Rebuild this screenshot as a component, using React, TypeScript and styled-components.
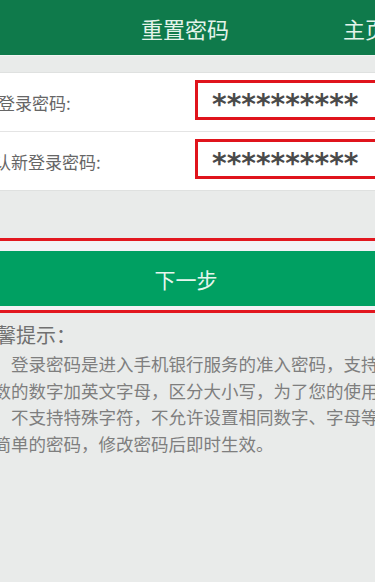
import React from "react";
import styled, { createGlobalStyle } from "styled-components";

const GlobalStyle = createGlobalStyle`
  html, body {
    margin: 0;
    padding: 0;
    background: #e9ebea;
  }
  body {
    font-family: "Noto Sans CJK SC", "Noto Sans", sans-serif;
  }
`;

const Viewport = styled.div`
  width: 375px;
  height: 582px;
  overflow: hidden;
  background: #e9ebea;
`;

/* the original phone screen is wider than the crop */
const Screen = styled.div`
  width: 434px;
  margin-left: -32px;
`;

const Header = styled.div`
  height: 55px;
  background: #0f7a4b;
  display: grid;
  grid-template-columns: 1fr auto 1fr;
  align-items: center;
  color: #e4f3ea;
  font-size: 22px;
  border-bottom: 1px solid #f2f5f3;
`;

const Title = styled.div`
  grid-column: 2;
`;

const HomeLink = styled.div`
  grid-column: 3;
  justify-self: end;
  padding-right: 15px;
`;

const Panel = styled.div`
  margin-top: 16px;
  background: #ffffff;
  border-top: 1px solid #dfe1e0;
  border-bottom: 1px solid #dfe1e0;
`;

const Row = styled.div<{ last?: boolean }>`
  height: 58px;
  display: flex;
  align-items: center;
  padding: 0 10px 0 13px;
  border-bottom: ${(p) => (p.last ? "none" : "1px solid #e4e4e4")};
`;

const Label = styled.div<{ shift?: number }>`
  font-size: 17px;
  color: #666666;
  white-space: nowrap;
  margin-left: ${(p) => p.shift ?? 0}px;
`;

const PasswordBox = styled.div`
  margin-left: auto;
  width: 177px;
  height: 34px;
  margin-bottom: 5px;
  border: 3px solid #e0141c;
  padding: 0 0 0 14px;
  display: flex;
  align-items: center;
  font-family: "DejaVu Sans", sans-serif;
  font-size: 28px;
  font-weight: 700;
  letter-spacing: 0;
  color: #4a4a4a;
  line-height: 1;
`;

const Stars = styled.span`
  padding-top: 10px;
`;

const RedFrame = styled.div`
  margin: 47px 5px 0;
  border: 3px solid #e2171f;
  padding: 10px 0 4px;
  background: #f2f2f5;
`;

const NextButton = styled.div`
  height: 55px;
  background: #00a062;
  color: #e6f6ee;
  font-size: 21px;
  display: flex;
  align-items: center;
  justify-content: center;
  padding-left: 2px;
`;

const Tips = styled.div`
  padding: 9px 8px 0;
  color: #7e7e7e;
`;

const TipsTitle = styled.div`
  font-size: 20px;
  line-height: 26px;
  margin-bottom: 3px;
  color: #707070;
`;

const TipLine = styled.div`
  font-size: 17.5px;
  line-height: 26.7px;
  white-space: nowrap;
`;

const tipLines = [
  "１、登录密码是进入手机银行服务的准入密码，支持６-２０",
  "位数的数字加英文字母，区分大小写，为了您的使用安",
  "全，不支持特殊字符，不允许设置相同数字、字母等过",
  "于简单的密码，修改密码后即时生效。",
];

export default function App() {
  return (
    <Viewport>
      <GlobalStyle />
      <Screen>
        <Header>
          <Title>重置密码</Title>
          <HomeLink>主页</HomeLink>
        </Header>
        <Panel>
          <Row>
            <Label>新登录密码:</Label>
            <PasswordBox>
              <Stars>**********</Stars>
            </PasswordBox>
          </Row>
          <Row last>
            <Label shift={-4}>确认新登录密码:</Label>
            <PasswordBox>
              <Stars>**********</Stars>
            </PasswordBox>
          </Row>
        </Panel>
        <RedFrame>
          <NextButton>下一步</NextButton>
        </RedFrame>
        <Tips>
          <TipsTitle>温馨提示：</TipsTitle>
          {tipLines.map((line) => (
            <TipLine key={line}>{line}</TipLine>
          ))}
        </Tips>
      </Screen>
    </Viewport>
  );
}
